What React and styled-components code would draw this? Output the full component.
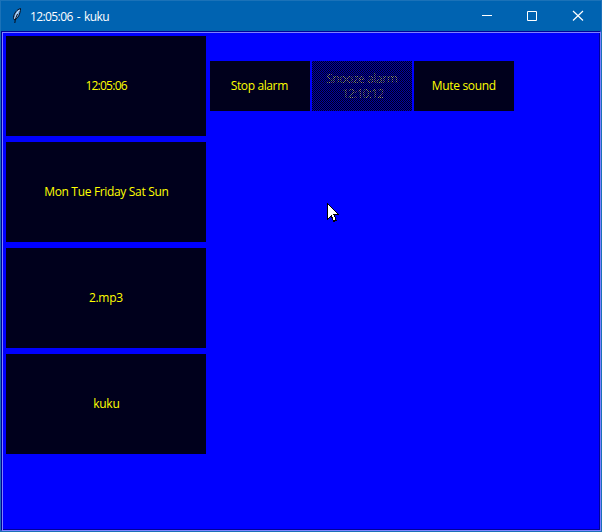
import React from "react";
import styled, { createGlobalStyle } from "styled-components";

const GlobalStyle = createGlobalStyle`
  * { box-sizing: border-box; }
  body { margin: 0; overflow: hidden; background: #0063b1; }
`;

const Window = styled.div`
  position: relative;
  display: flex;
  flex-direction: column;
  width: 602px;
  height: 532px;
  border: 1px solid #1b72b8;
  background: #0063b1;
  font: 12px/15px "Open Sans", "Noto Sans", sans-serif;
  cursor: default;
`;

const TitleBar = styled.header`
  display: flex;
  align-items: center;
  flex: 0 0 30px;
  color: #fff;
`;

const AppIcon = styled.svg`
  width: 16px;
  height: 16px;
  margin-left: 7px;
`;

const Label = styled.span`
  display: block;
  white-space: nowrap;
  letter-spacing: ${(p) => p.$tracking || 0}px;
  margin-right: ${(p) => -(p.$tracking || 0)}px;
  word-spacing: ${(p) => p.$wordGap || 0}px;
  transform: translateX(${(p) => p.$shift || 0}px);
`;

const Title = styled.h1`
  flex: 1;
  margin: 0 0 0 6px;
  font: inherit;
`;

const Control = styled.button`
  display: grid;
  place-items: center;
  width: 46px;
  height: 30px;
  padding: 0;
  border: 0;
  background: none;
  color: #fff;
`;

const Glyph = styled.svg`
  width: 12px;
  height: 12px;
  fill: none;
  stroke: currentColor;
`;

const Client = styled.main`
  flex: 1;
  display: flex;
  gap: 4px;
  padding: 4px;
  background: #0000ff;
  border: 1px solid;
  border-color: #000099 #8080ff #8080ff #000099;
  box-shadow: inset 1px 1px #8080ff, inset -1px -1px #000099;
`;

const Column = styled.div`
  display: flex;
  flex-direction: column;
  gap: 6px;
`;

const Actions = styled.div`
  display: flex;
  gap: 2px;
  margin-top: 25px;
  height: 50px;
`;

const Tile = styled.button`
  display: flex;
  flex-direction: column;
  align-items: center;
  justify-content: center;
  width: ${(p) => (p.$small ? 100 : 200)}px;
  height: ${(p) => (p.$small ? 50 : 100)}px;
  padding: 0 0 2px;
  border: 0;
  background: #00001c;
  color: #ffff00;
  font: inherit;
`;

const StippledTile = styled(Tile)`
  position: relative;
  padding-bottom: 0;
  color: #858585;

  &::after {
    content: "";
    position: absolute;
    inset: 0;
    background: repeating-conic-gradient(#00001c 0 25%, transparent 0 50%) 0 0 / 2px 2px;
  }

  &::before {
    content: "";
    position: absolute;
    inset: 0;
    background: repeating-conic-gradient(#0000aa 0 25%, transparent 0 50%) 1px 0 / 2px 2px;
  }

  span { position: relative; }
`;

const Pointer = styled.svg`
  position: absolute;
  left: 325px;
  top: 201px;
  width: 14px;
  height: 20px;
  pointer-events: none;
`;

const alarm = [
  { text: "12:05:06", tracking: -0.75, shift: 0.5 },
  { text: "Mon Tue Friday Sat Sun", tracking: -0.33, shift: 0.5 },
  { text: "2.mp3", tracking: -0.3 },
  { text: "kuku", tracking: -0.25, shift: 0.5 },
];

export default function App() {
  return (
    <>
      <GlobalStyle />
      <Window>
        <TitleBar>
          <AppIcon viewBox="0 0 16 16">
            <path d="M12.5 0.5C9 1.5 6 5 5.5 9.5L6.5 12C10 10.5 12.3 6 12.5.5Z" fill="#6fa5df" stroke="#080c18" />
            <path d="M11.5 2C9 4 7.6 7.5 6.8 11" fill="none" stroke="#e9f4ff" />
            <path d="M9.5 6C8.3 8 7.3 11 6.8 15" fill="none" stroke="#080c18" />
          </AppIcon>
          <Title><Label $tracking={-0.6} $wordGap={1.5}>12:05:06 - kuku</Label></Title>
          <Control aria-label="Minimize">
            <Glyph viewBox="0 0 12 12"><path d="M2 5.5H12" /></Glyph>
          </Control>
          <Control aria-label="Maximize">
            <Glyph viewBox="0 0 12 12"><path d="M1.5 1.5H10.5V10.5H1.5Z" /></Glyph>
          </Control>
          <Control aria-label="Close">
            <Glyph viewBox="0 0 12 12"><path d="M1 1L11 10.5M11 1L1 10.5" strokeWidth="1.2" /></Glyph>
          </Control>
        </TitleBar>
        <Client>
          <Column>
            {alarm.map((item) => (
              <Tile key={item.text}>
                <Label $tracking={item.tracking} $shift={item.shift}>{item.text}</Label>
              </Tile>
            ))}
          </Column>
          <Actions>
            <Tile $small><Label $tracking={-0.38} $shift={-0.5}>Stop alarm</Label></Tile>
            <StippledTile $small disabled>
              <Label $tracking={-0.42}>Snooze alarm</Label>
              <Label $tracking={-0.75} $shift={1}>12:10:12</Label>
            </StippledTile>
            <Tile $small><Label $tracking={-0.33}>Mute sound</Label></Tile>
          </Actions>
        </Client>
        <Pointer viewBox="0 0 14 20" shapeRendering="crispEdges">
          <path d="M1.5 1.5V17.5L5.3 14L7.7 19.3L10.3 18.3L8 12.8H13Z" fill="#fff" stroke="#000" />
        </Pointer>
      </Window>
    </>
  );
}
